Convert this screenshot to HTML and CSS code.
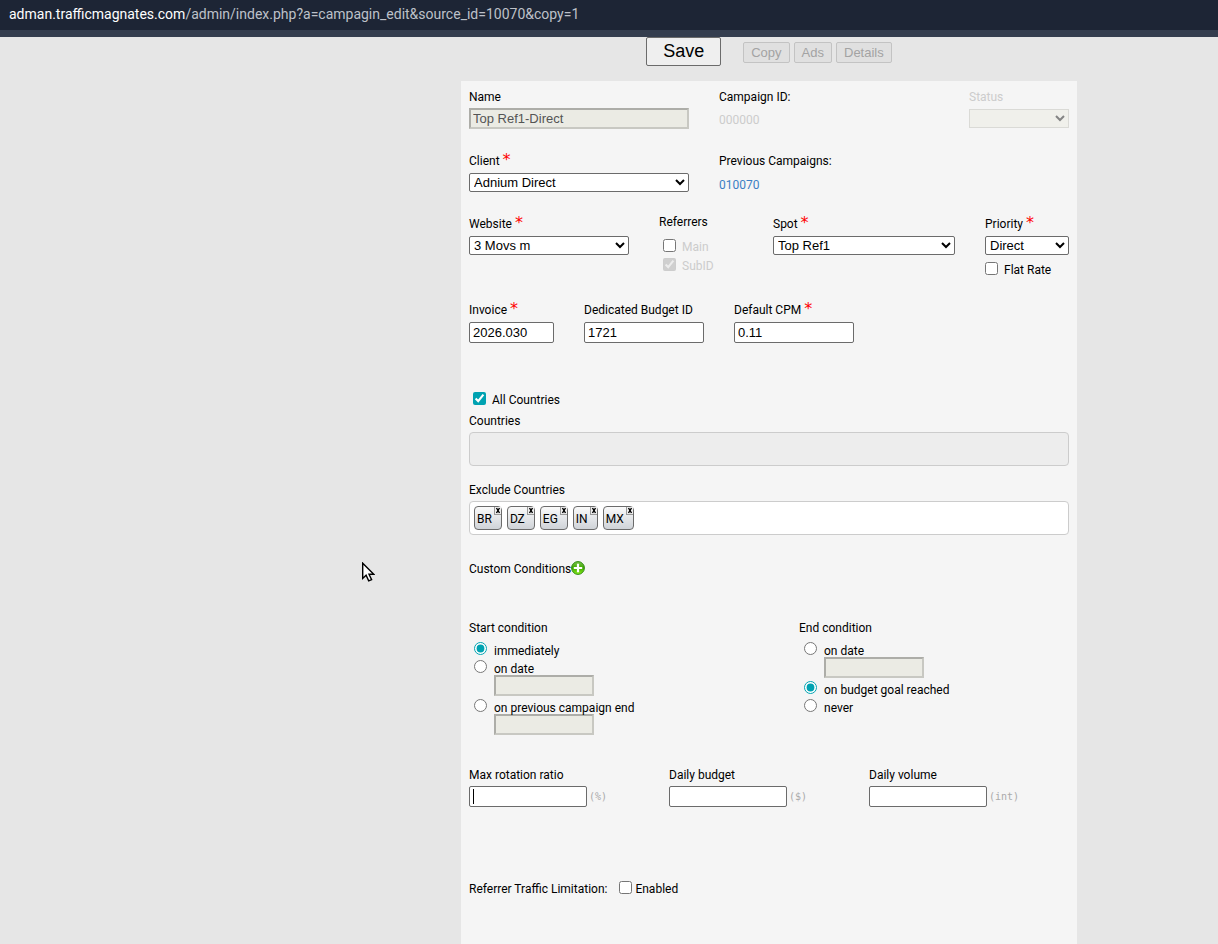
FILE: index.html
```html
<!DOCTYPE html>
<html lang="en">
<head>
<meta charset="utf-8">
<title>Campaign edit</title>
<link rel="stylesheet" href="styles.css">
</head>
<body>
<header class="address"><span class="host">adman.trafficmagnates.com</span>/admin/index.php?a=campagin_edit&amp;source_id=10070&amp;copy=1</header>
<form class="page">
  <div class="toolbar">
    <button class="save" type="button">Save</button>
    <button class="tool" type="button" disabled>Copy</button>
    <button class="tool" type="button" disabled>Ads</button>
    <button class="tool" type="button" disabled>Details</button>
  </div>
  <main class="panel">
    <section class="row top">
      <div class="field w220"><label for="name">Name</label><input class="off" id="name" type="text" value="Top Ref1-Direct" disabled></div>
      <div class="field grow"><span class="label">Campaign ID:</span><span class="value muted">000000</span></div>
      <div class="field w100"><label class="muted" for="status">Status</label><select id="status" class="status" disabled><option></option></select></div>
    </section>
    <section class="row">
      <div class="field w220"><label for="client">Client <b class="req">*</b></label><select id="client"><option>Adnium Direct</option></select></div>
      <div class="field grow"><span class="label">Previous Campaigns:</span><a class="value" href="#010070">010070</a></div>
    </section>
    <section class="row">
      <div class="field w160"><label for="website">Website <b class="req">*</b></label><select id="website"><option>3 Movs m</option></select></div>
      <div class="field w84 referrers"><span class="label">Referrers</span>
        <label class="check muted"><input type="checkbox">Main</label>
        <label class="check muted"><input type="checkbox" checked disabled>SubID</label>
      </div>
      <div class="field grow"><label for="spot">Spot <b class="req">*</b></label><select id="spot"><option>Top Ref1</option></select></div>
      <div class="field w84"><label for="priority">Priority <b class="req">*</b></label><select id="priority"><option>Direct</option></select>
        <label class="check flat"><input type="checkbox">Flat Rate</label>
      </div>
    </section>
    <section class="row">
      <div class="field w85"><label for="invoice">Invoice <b class="req">*</b></label><input id="invoice" type="text" value="2026.030"></div>
      <div class="field w120"><label for="budgetid">Dedicated Budget ID</label><input id="budgetid" type="text" value="1721"></div>
      <div class="field w120"><label for="cpm">Default CPM <b class="req">*</b></label><input id="cpm" type="text" value="0.11"></div>
    </section>
    <section class="countries">
      <label class="check all"><input type="checkbox" checked>All Countries</label>
      <span class="label">Countries</span>
      <div class="tags empty"></div>
      <span class="label">Exclude Countries</span>
      <div class="tags">
        <span class="tag">BR<button type="button" aria-label="Remove BR"><svg viewBox="0 0 6 7"><path d="M1.5 1l3 5m0-5l-3 5"/></svg></button></span>
        <span class="tag">DZ<button type="button" aria-label="Remove DZ"><svg viewBox="0 0 6 7"><path d="M1.5 1l3 5m0-5l-3 5"/></svg></button></span>
        <span class="tag">EG<button type="button" aria-label="Remove EG"><svg viewBox="0 0 6 7"><path d="M1.5 1l3 5m0-5l-3 5"/></svg></button></span>
        <span class="tag">IN<button type="button" aria-label="Remove IN"><svg viewBox="0 0 6 7"><path d="M1.5 1l3 5m0-5l-3 5"/></svg></button></span>
        <span class="tag">MX<button type="button" aria-label="Remove MX"><svg viewBox="0 0 6 7"><path d="M1.5 1l3 5m0-5l-3 5"/></svg></button></span>
      </div>
    </section>
    <section class="custom"><span>Custom Conditions</span>
      <button class="add" type="button" aria-label="Add condition"><svg viewBox="0 0 14 14">
        <defs><linearGradient id="green" x1="0" y1="0" x2="0" y2="1"><stop offset="0" stop-color="#7cc44a"/><stop offset=".5" stop-color="#3ea800"/><stop offset="1" stop-color="#8af01c"/></linearGradient></defs>
        <circle cx="7" cy="7" r="6.4" fill="url(#green)" stroke="#2f8a12" stroke-width="1"/><path d="M7 2.8v8.4M2.8 7h8.4" stroke="#fff" stroke-width="2.2"/></svg></button>
    </section>
    <section class="conditions">
      <fieldset><legend>Start condition</legend>
        <label class="radio"><input type="radio" name="start" checked>immediately</label>
        <label class="radio"><input type="radio" name="start">on date</label>
        <input class="off" type="text" aria-label="Start date" disabled>
        <label class="radio"><input type="radio" name="start">on previous campaign end</label>
        <input class="off" type="text" aria-label="Previous campaign" disabled>
      </fieldset>
      <fieldset><legend>End condition</legend>
        <label class="radio"><input type="radio" name="end">on date</label>
        <input class="off" type="text" aria-label="End date" disabled>
        <label class="radio"><input type="radio" name="end" checked>on budget goal reached</label>
        <label class="radio"><input type="radio" name="end">never</label>
      </fieldset>
    </section>
    <section class="limits">
      <div><label for="ratio">Max rotation ratio</label><div class="unit"><input class="active" id="ratio" type="text"><span>(%)</span></div></div>
      <div><label for="daily">Daily budget</label><div class="unit"><input id="daily" type="text"><span>($)</span></div></div>
      <div><label for="volume">Daily volume</label><div class="unit"><input id="volume" type="text"><span>(int)</span></div></div>
    </section>
    <section class="traffic"><span>Referrer Traffic Limitation:</span><label class="check"><input type="checkbox">Enabled</label></section>
  </main>
</form>
<svg class="pointer" viewBox="0 0 13 20"><path d="M.7 1.2v15.2l3.4-3.2 2.6 5.6 2.9-1.2-2.6-5.3h4.8z" fill="#fff" stroke="#000" stroke-width="1.4"/></svg>
</body>
</html>
```
FILE: styles.css
```css
* { box-sizing: border-box; }
body {
  margin: 0;
  min-height: 100vh;
  display: flex;
  flex-direction: column;
  background: #e6e6e6;
  color: #000;
  font: 12px/16px Roboto, sans-serif;
}
.address {
  height: 37px;
  padding-left: 9px;
  border-bottom: 7px solid #343d4e;
  background: #1d2535;
  color: #bdc1c9;
  font: 14px/28px Roboto, sans-serif;
  white-space: nowrap;
}
.host { color: #fff; }
.page {
  flex: 1;
  display: flex;
  flex-direction: column;
  align-items: center;
  padding-left: 320px;
}
.toolbar {
  display: flex;
  align-items: center;
  gap: 4px;
  padding-bottom: 15px;
}
button, input, select { margin: 0; font: 13px "Liberation Sans", Arial, sans-serif; }
.save {
  width: 75px;
  height: 29px;
  margin-right: 18px;
  border: 1px solid #6b6b6b;
  border-radius: 2px;
  background: #efefef;
  color: #000;
  font-size: 18px;
}
.tool {
  height: 21px;
  margin-top: 2px;
  padding: 0 7px;
  border: 1px solid #c3c3c3;
  border-radius: 2px;
  background: #e0e0e0;
  color: #a3a3a3;
}
.panel {
  flex: 1;
  width: 100%;
  max-width: 616px;
  padding: 8px;
  background: #f5f5f5;
}
label, .label, legend { display: block; padding: 0; }
.row { display: flex; gap: 30px; margin-bottom: 24px; }
.field { display: flex; flex-direction: column; gap: 4px; }
.top .field { gap: 3px; }
.grow { flex: 1; }
.w84 { width: 84px; }
.w85 { width: 85px; }
.w100 { width: 100px; }
.w120 { width: 120px; }
.w160 { width: 160px; }
.w220 { width: 220px; }
input[type="text"] {
  width: 100%;
  height: 21px;
  padding: 1px 3px;
  border: 1px solid #6b6b6b;
  border-radius: 2px;
  background: #fff;
}
input[type="text"].off {
  padding: 1px 2px;
  border: 2px solid;
  border-color: #adada8 #c8c8c2 #c8c8c2 #adada8;
  border-radius: 0;
  background: #ebebe4;
  color: #545454;
}
select {
  width: 100%;
  height: 19px;
  border: 1px solid #6b6b6b;
  border-radius: 2px;
  background: #fff;
  color: #000;
}
.status { margin: 1px 0; border-color: #d0d0ca; border-radius: 0; background: #eeeee8; color: #555; }
.muted { color: #ccc; }
.value { margin-bottom: -5px; line-height: 24px; }
a { color: #3c7fc4; text-decoration: none; }
.req { color: #f00; font: 16px/1px "DejaVu Sans", sans-serif; }
.check { display: flex; align-items: flex-start; gap: 6px; }
input[type="checkbox"], input[type="radio"] {
  width: 13px;
  height: 13px;
  flex: none;
  accent-color: #00a2b1;
}
.referrers { gap: 3px; margin-top: -2px; }
.referrers .check { padding-left: 4px; }
.referrers .label { margin-bottom: 6px; }
.flat { margin-top: 3px; }
.countries { margin-top: 49px; }
.all { padding-left: 4px; margin-bottom: 5px; }
.tags {
  display: flex;
  gap: 5px;
  height: 34px;
  margin-top: 3px;
  padding: 4px;
  border: 1px solid #ccc;
  border-radius: 4px;
  background: #fff;
}
.empty { margin-bottom: 16px; background: #ededed; }
.tag {
  position: relative;
  height: 24px;
  padding: 0 9px 0 2px;
  border: 1px solid #6b6b6b;
  border-radius: 4px;
  background: linear-gradient(#fafafa, #cfd3d8);
  line-height: 24px;
}
.tag button {
  position: absolute;
  top: 0;
  right: 0;
  width: 7px;
  height: 8px;
  padding: 0;
  border: solid #999;
  border-width: 0 0 1px 1px;
  background: #eee;
}
.tag svg { display: block; width: 6px; height: 7px; fill: none; stroke: #000; stroke-width: 1.4; }
.custom { display: flex; margin-top: 26px; }
.add { width: 14px; height: 14px; padding: 0; border: 0; background: none; }
.add svg { display: block; }
.conditions { display: grid; grid-template-columns: 11fr 9fr; margin: 43px 0 29px; }
fieldset { margin: 0; padding: 0; border: 0; min-width: 0; }
legend { margin-bottom: 6px; }
.radio { display: flex; gap: 7px; padding-left: 5px; line-height: 18px; }
fieldset input[type="text"].off { display: block; width: 100px; margin: -3px 0 3px 25px; }
.limits { display: grid; grid-template-columns: repeat(3, 1fr); }
.unit { display: flex; align-items: center; gap: 2px; margin-top: 3px; }
.unit input[type="text"] { width: 118px; }
.unit span { color: #aaa; font: 10px "DejaVu Sans Mono", monospace; }
.unit input[type="text"].active {
  background: linear-gradient(#000, #000) 3px 2px / 1px 15px no-repeat #fff;
}
.traffic { display: flex; gap: 12px; margin: 74px 0 40px; }
.traffic .check { gap: 3px; }
.pointer { position: absolute; left: 362px; top: 562px; width: 13px; height: 20px; }
```
